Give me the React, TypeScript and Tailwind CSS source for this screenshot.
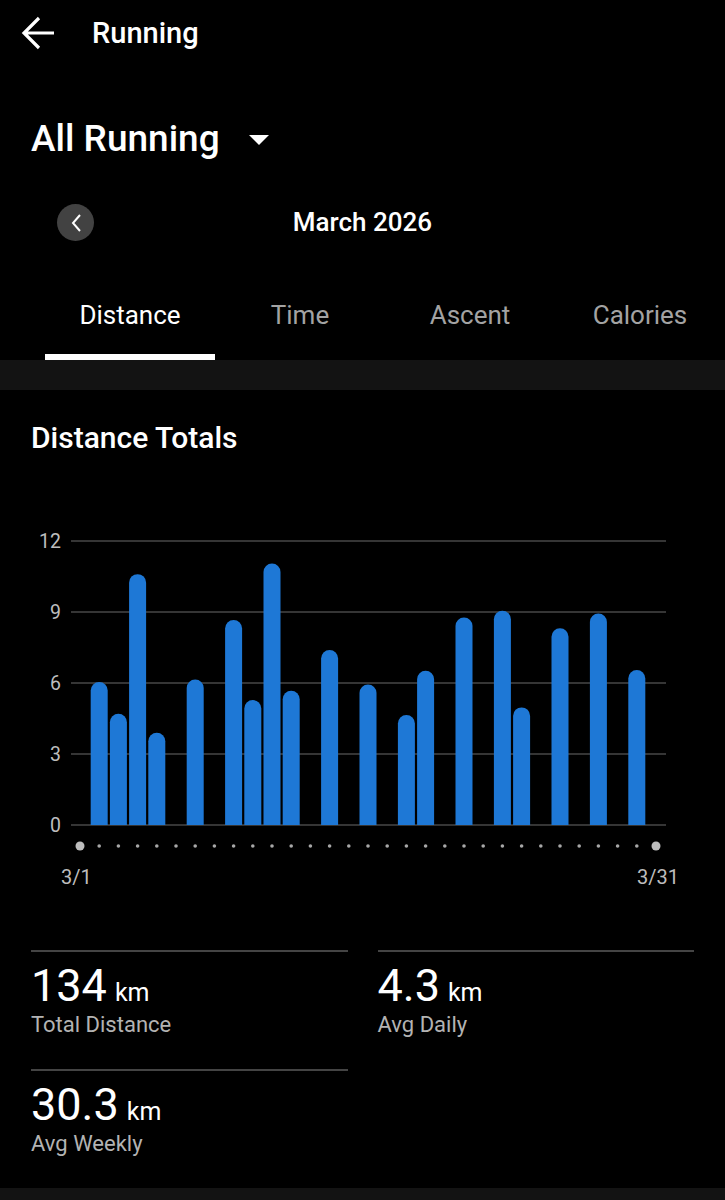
import React from "react";

const bars: [number, number][] = [
  [1, 6.04], [2, 4.7], [3, 10.6], [4, 3.9], [6, 6.15], [8, 8.66], [9, 5.28],
  [10, 11.05], [11, 5.67], [13, 7.39], [15, 5.94], [17, 4.65], [18, 6.52],
  [20, 8.77], [22, 9.05], [23, 4.97], [25, 8.31], [27, 8.94], [29, 6.55],
];

// chart svg starts at page y=500
const OFF = 500;
const BASE = 825 - OFF;
const PER_KM = 71 / 3;
const dotX = (i: number) => 80 + 19.2 * i;

function Chart() {
  const grid = [0, 3, 6, 9, 12];
  return (
    <svg width="725" height="400" viewBox="0 0 725 400" className="block">
      {grid.map((g) => {
        const y = BASE - g * PER_KM;
        return (
          <g key={g}>
            <line x1="71" x2="666" y1={y} y2={y} stroke="#474747" strokeWidth="1.5" />
            <text
              x="61"
              y={y + 7}
              textAnchor="end"
              fill="#bdbdbd"
              fontSize="19.5"
              fontFamily="Roboto, sans-serif"
            >
              {g}
            </text>
          </g>
        );
      })}
      {bars.map(([i, v]) => {
        const cx = dotX(i);
        const x0 = cx - 8.5;
        const top = BASE - v * PER_KM;
        return (
          <path
            key={i}
            d={`M${x0} ${BASE} V${top + 8.5} A8.5 8.5 0 0 1 ${x0 + 17} ${top + 8.5} V${BASE} Z`}
            fill="#1e78d6"
          />
        );
      })}
      {Array.from({ length: 31 }, (_, i) => {
        const end = i === 0 || i === 30;
        return (
          <circle
            key={i}
            cx={dotX(i)}
            cy={846 - OFF}
            r={end ? 4.5 : 1.8}
            fill={end ? "#bdbdbd" : "#a8a8a8"}
          />
        );
      })}
      <text x="61" y={884 - OFF} fill="#bdbdbd" fontSize="20" fontFamily="Roboto, sans-serif">
        3/1
      </text>
      <text x="637" y={884 - OFF} fill="#bdbdbd" fontSize="20" fontFamily="Roboto, sans-serif">
        3/31
      </text>
    </svg>
  );
}

function Stat({ value, label }: { value: string; label: string }) {
  return (
    <div className="border-t-2 border-[#444444] pt-[12px] pb-[31px]">
      <div className="flex items-baseline h-[44px] leading-[44px]">
        <span className="text-[45px] text-white">{value}</span>
        <span className="text-[25px] text-white ml-[8px]">km</span>
      </div>
      <p className="mt-[4px] text-[22px] leading-[26px] text-[#b3b3b3]">{label}</p>
    </div>
  );
}

export default function App() {
  const tabs = ["Distance", "Time", "Ascent", "Calories"];
  return (
    <div className="w-[725px] h-[1200px] overflow-hidden bg-black font-[Roboto,sans-serif] text-white">
      {/* TOP BAR */}
      <header className="h-[66px] flex items-center">
        <svg width="40" height="36" viewBox="0 0 40 36" className="ml-[18px]">
          <path d="M36 18H6.5M21 3L6 18l15 15" stroke="#fff" strokeWidth="3.2" fill="none" />
        </svg>
        <span className="ml-[34px] text-[29px] font-medium leading-none">Running</span>
      </header>

      {/* ACTIVITY FILTER */}
      <div className="mt-[42px] h-[60px] flex items-center pl-[31px]">
        <span className="text-[37px] font-medium leading-none">All Running</span>
        <svg width="20" height="10" viewBox="0 0 20 10" className="ml-[29px] mt-[4px]">
          <path d="M0 0h20L10 10z" fill="#fff" />
        </svg>
      </div>

      {/* MONTH PICKER */}
      <div className="mt-[28px] h-[52px] relative flex items-center justify-center">
        <button className="absolute left-[57px] top-[8px] w-[37px] h-[37px] rounded-full bg-[#424242] flex items-center justify-center">
          <svg width="12" height="18" viewBox="0 0 12 18">
            <path d="M10 1L3 9l7 8" stroke="#fff" strokeWidth="2" fill="none" />
          </svg>
        </button>
        <span className="text-[26px] font-medium leading-none">March 2026</span>
      </div>

      {/* TABS */}
      <div className="mt-[22px] pl-[45px] grid grid-cols-[170px_170px_170px_170px]">
        {tabs.map((t, i) => (
          <div key={t} className="flex flex-col">
            <div
              className={`h-[84px] pt-[6px] flex items-center justify-center text-[26px] ${i === 0 ? "text-white" : "text-[#a3a3a3]"}`}
            >
              {t}
            </div>
            <div className={`h-[6px] ${i === 0 ? "bg-white" : "bg-transparent"}`} />
          </div>
        ))}
      </div>
      <div className="h-[30px] bg-[#131313]" />

      {/* DISTANCE TOTALS */}
      <section>
        <h2 className="pt-[30px] pl-[31px] text-[30px] font-medium leading-[36px]">
          Distance Totals
        </h2>
        <div className="mt-[44px]">
          <Chart />
        </div>
        <div className="mt-[50px] px-[31px] grid grid-cols-2 gap-x-[30px]">
          <Stat value="134" label="Total Distance" />
          <Stat value="4.3" label="Avg Daily" />
          <Stat value="30.3" label="Avg Weekly" />
        </div>
      </section>
      <div className="h-[14px] bg-[#131313]" />
    </div>
  );
}
